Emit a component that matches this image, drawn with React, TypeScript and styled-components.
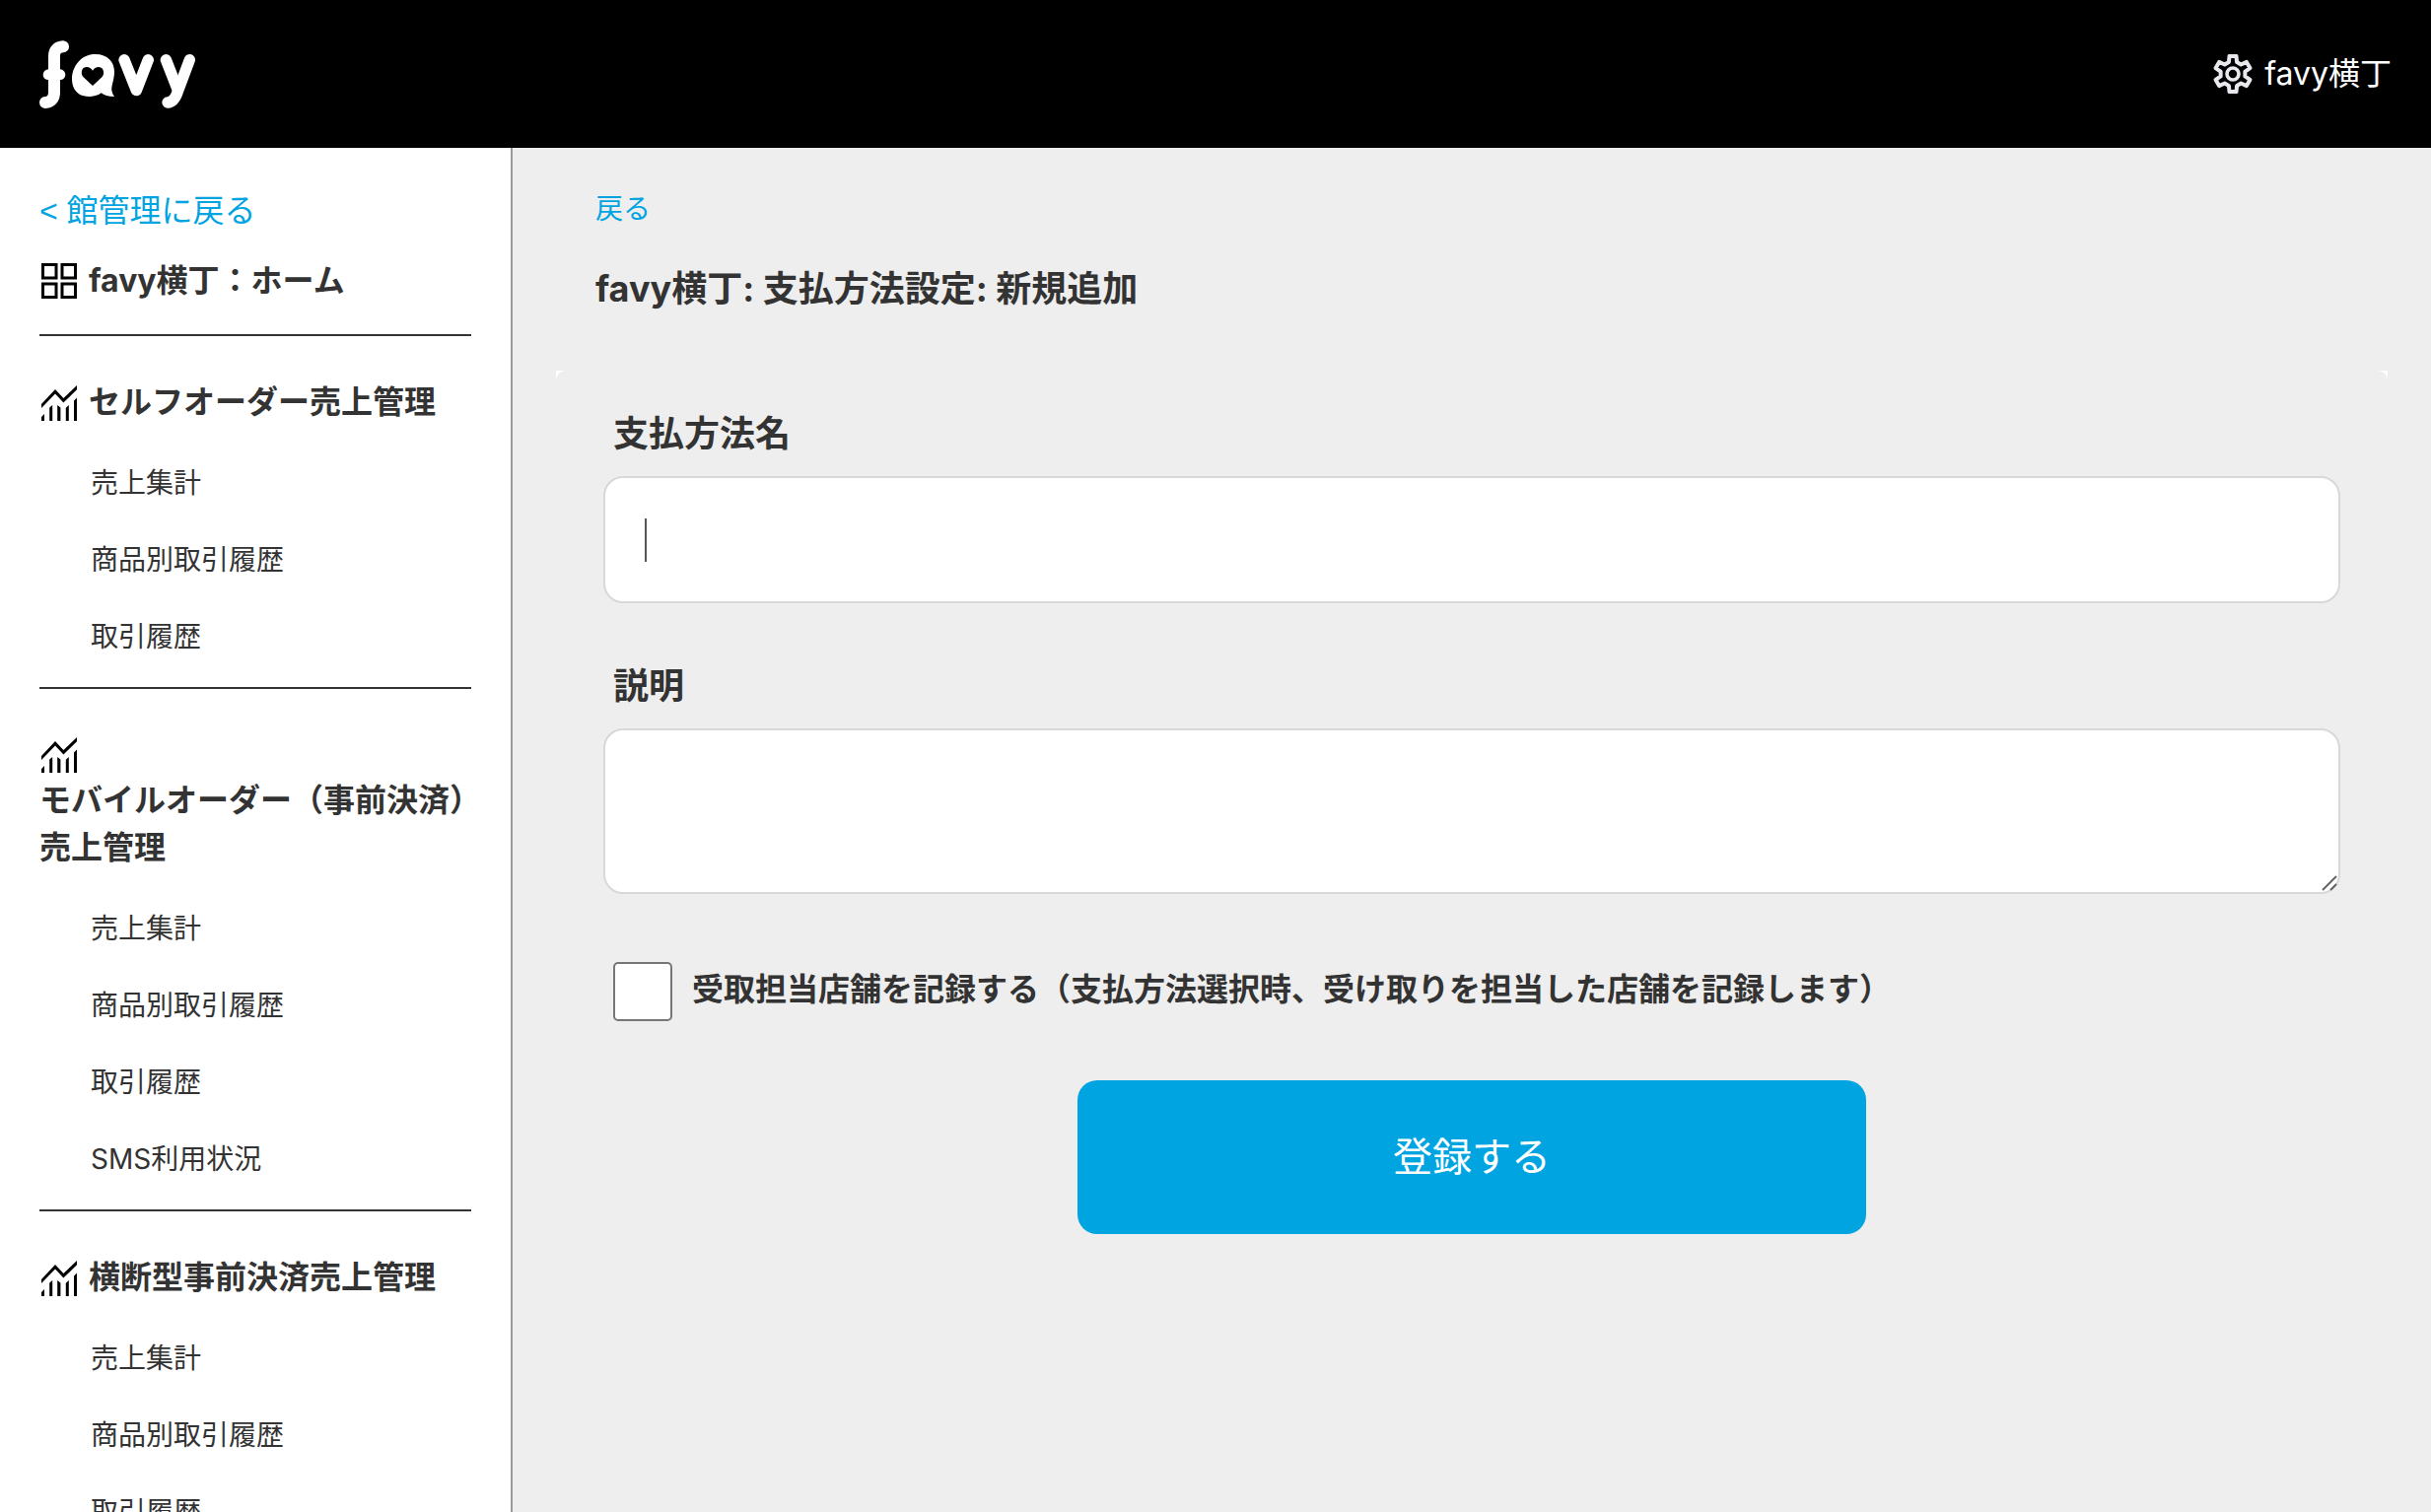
import React from "react";
import styled, { createGlobalStyle } from "styled-components";

const color = {
  brand: "#00a4e1",
  text: "#333",
  page: "#eee",
  edge: "#999",
  field: "#d8d8d8",
};

const GlobalStyle = createGlobalStyle`
  *, *::before, *::after { box-sizing: border-box; }
  body {
    margin: 0;
    background: ${color.page};
    color: ${color.text};
    font-family: Inter, "Noto Sans CJK JP", sans-serif;
    font-size: 28px;
    line-height: 1.5;
  }
  a { color: inherit; text-decoration: none; }
  input, textarea, button { font: inherit; color: inherit; margin: 0; }
`;

const Shell = styled.div`
  display: flex;
  flex-direction: column;
  height: 100vh;
`;

const Header = styled.header`
  display: flex;
  flex: none;
  align-items: center;
  justify-content: space-between;
  height: 150px;
  padding: 0 40px;
  background: #000;
  color: #fff;
`;

const LogoLink = styled.a`
  display: block;
  line-height: 0;
`;

const AccountLink = styled.a`
  display: flex;
  align-items: center;
  gap: 12px;
  font-size: 32px;
`;

const Body = styled.div`
  display: flex;
  flex: 1;
  min-height: 0;
`;

const Sidebar = styled.nav`
  flex: none;
  width: 520px;
  padding: 40px 40px 0;
  overflow-y: auto;
  scrollbar-width: none;
  background: #fff;
  border-right: 2px solid ${color.edge};
`;

const BackLink = styled.a`
  display: block;
  color: ${color.brand};
  font-family: "Liberation Sans", "Noto Sans CJK JP", sans-serif;
  font-size: 32px;
  line-height: 48px;
`;

const HomeLink = styled.a`
  display: flex;
  align-items: center;
  gap: 10px;
  margin-top: 23px;
  padding-bottom: 30px;
  border-bottom: 2px solid ${color.text};
  font-size: 32px;
  font-weight: 700;
  line-height: 48px;
`;

const Section = styled.section`
  padding: 43px 0 12px;
  border-bottom: 2px solid ${color.text};
`;

const SectionTitle = styled.h2`
  display: flex;
  flex-wrap: wrap;
  align-items: center;
  column-gap: 10px;
  margin: 0;
  font-size: 32px;
  font-weight: 700;
  line-height: 48px;

  svg {
    margin: 4px 0 2px;
  }
`;

const Menu = styled.ul`
  margin: 19px 0 0;
  padding: 0;
  list-style: none;
`;

const MenuLink = styled.a`
  display: block;
  padding: 18px 0 18px 52px;
  line-height: 42px;
`;

const Main = styled.main`
  flex: 1;
  min-width: 0;
  padding: 41px 44px;
  overflow-y: auto;
  scrollbar-width: none;
`;

const PageHead = styled.div`
  padding: 0 40px;
`;

const ReturnLink = styled.a`
  display: block;
  color: ${color.brand};
  line-height: 42px;
`;

const PageTitle = styled.h1`
  margin: 33px 0 56px;
  font-size: 36px;
  font-weight: 700;
  line-height: 54px;
`;

const Card = styled.div`
  background: #fff;
`;

const Form = styled.form`
  display: flex;
  flex-direction: column;
  padding: 37px 48px;
  background: ${color.page};
  border-radius: 10px 10px 0 0;
`;

const Field = styled.div`
  position: relative;
  display: flex;
  flex-direction: column;
  margin-bottom: 57px;
`;

const Label = styled.label`
  margin-bottom: 16px;
  padding-left: 10px;
  font-size: 36px;
  font-weight: 700;
  line-height: 54px;
`;

const TextInput = styled.input`
  height: 129px;
  padding: 0 40px;
  border: 2px solid ${color.field};
  border-radius: 20px;
  background: linear-gradient(#555, #555) 40px center / 2px 44px no-repeat #fff;
  caret-color: transparent;
  outline: none;
`;

const TextArea = styled.textarea`
  height: 168px;
  padding: 40px;
  border: 2px solid ${color.field};
  border-radius: 20px;
  background: #fff;
  outline: none;
  resize: none;
`;

const Grip = styled.svg`
  position: absolute;
  right: 3px;
  bottom: 3px;
  pointer-events: none;
`;

const CheckRow = styled.div`
  display: flex;
  gap: 20px;
  margin: 12px 10px 60px;
`;

const Checkbox = styled.input`
  flex: none;
  appearance: none;
  width: 60px;
  height: 60px;
  border: 2px solid #767676;
  border-radius: 5px;
  background: #fff;

  &:checked {
    background: ${color.brand};
  }
`;

const CheckLabel = styled.label`
  font-size: 32px;
  font-weight: 700;
  line-height: 56px;
`;

const Submit = styled.button`
  align-self: center;
  width: 800px;
  max-width: 100%;
  padding: 48px 20px;
  border: 0;
  border-radius: 20px;
  background: ${color.brand};
  color: #fff;
  font-size: 40px;
  line-height: 60px;
  cursor: pointer;
`;

function Logo() {
  return (
    <svg width="158" height="69" viewBox="120 120 474 207" role="img" aria-label="favy">
      <g fill="none" stroke="#fff" strokeWidth="36" strokeLinecap="round" strokeLinejoin="round">
        <path d="M192 139C175 140 165 150 165 166V278C165 297 155 308 138 309" />
        <path strokeWidth="32" d="M147 224H183" />
        <path strokeWidth="34" d="M378 179L415 272L451 179" />
        <path strokeWidth="34" d="M505 179L540 268" />
        <path strokeWidth="34" d="M577 179L541 275C534 297 526 308 510 309" />
      </g>
      <path
        fill="#fff"
        d="M284 162C325 159 348 184 348 215C348 240 338 258 340 272Q342 284 348 291C330 291 316 287 308 280C298 288 284 291 270 291C238 291 219 270 219 238C219 196 250 164 284 162Z"
      />
      <path d="M282 258L254 232C246 224 247 210 254 204C263 198 276 201 282 212C288 201 301 198 309 204C317 210 318 224 310 232Z" />
    </svg>
  );
}

const gearPath =
  [0, 60, 120, 180, 240, 300]
    .flatMap((tooth) =>
      [
        [12.6, -19],
        [18.4, -11],
        [18.4, 11],
        [12.6, 19],
      ].map(([radius, offset]) => {
        const angle = ((tooth + offset - 90) * Math.PI) / 180;
        return `${(radius * Math.cos(angle)).toFixed(2)} ${(radius * Math.sin(angle)).toFixed(2)}`;
      })
    )
    .reduce((path, point, i) => path + (i ? "L" : "M") + point, "") + "Z";

function GearIcon() {
  return (
    <svg width="40" height="40" viewBox="-20 -20 40 40" fill="none" stroke="#e8e8ee" strokeWidth="4" strokeLinejoin="round" aria-hidden="true">
      <path d={gearPath} />
      <circle r="6" strokeWidth="3.6" />
    </svg>
  );
}

function GridIcon() {
  return (
    <svg width="40" height="40" viewBox="0 0 40 40" fill="none" stroke="#000" strokeWidth="3" aria-hidden="true">
      <path d="M3.5 3.5h13.5v13.5h-13.5zM23 3.5h13.5v13.5h-13.5zM3.5 23h13.5v13.5h-13.5zM23 23h13.5v13.5h-13.5z" />
    </svg>
  );
}

function ChartIcon() {
  return (
    <svg width="40" height="40" viewBox="-2 -2 40 40" aria-hidden="true">
      <path d="M0 19L14 4L22.4 13L36 0V4.2L22.4 17.5L14 8.6L0 23Z" />
      <path d="M0 32L3 29V36H0ZM8.2 22.4L11.2 20V36H8.2ZM16.2 20L19.4 22.6V36H16.2ZM24.8 22.8L27.8 20V36H24.8ZM33 15.6L36 12.6V36H33Z" />
    </svg>
  );
}

const sections = [
  {
    title: "セルフオーダー売上管理",
    items: ["売上集計", "商品別取引履歴", "取引履歴"],
  },
  {
    title: "モバイルオーダー（事前決済）売上管理",
    items: ["売上集計", "商品別取引履歴", "取引履歴", "SMS利用状況"],
  },
  {
    title: "横断型事前決済売上管理",
    items: ["売上集計", "商品別取引履歴", "取引履歴"],
  },
];

export default function App() {
  return (
    <Shell lang="ja">
      <GlobalStyle />
      <Header>
        <LogoLink href="#top">
          <Logo />
        </LogoLink>
        <AccountLink href="#account">
          <GearIcon />
          favy横丁
        </AccountLink>
      </Header>
      <Body>
        <Sidebar>
          <BackLink href="#building">&lt; 館管理に戻る</BackLink>
          <HomeLink href="#home">
            <GridIcon />
            favy横丁：ホーム
          </HomeLink>
          {sections.map((section) => (
            <Section key={section.title}>
              <SectionTitle>
                <ChartIcon />
                <span>{section.title}</span>
              </SectionTitle>
              <Menu>
                {section.items.map((item) => (
                  <li key={item}>
                    <MenuLink href="#menu">{item}</MenuLink>
                  </li>
                ))}
              </Menu>
            </Section>
          ))}
        </Sidebar>
        <Main>
          <PageHead>
            <ReturnLink href="#back">戻る</ReturnLink>
            <PageTitle>favy横丁: 支払方法設定: 新規追加</PageTitle>
          </PageHead>
          <Card>
            <Form onSubmit={(event) => event.preventDefault()}>
              <Field>
                <Label htmlFor="name">支払方法名</Label>
                <TextInput id="name" type="text" />
              </Field>
              <Field>
                <Label htmlFor="description">説明</Label>
                <TextArea id="description" />
                <Grip width="16" height="16" viewBox="0 0 16 16" stroke="#666" strokeWidth="2" aria-hidden="true">
                  <path d="M1 15L15 1M9 15L15 9" />
                </Grip>
              </Field>
              <CheckRow>
                <Checkbox id="record" type="checkbox" />
                <CheckLabel htmlFor="record">
                  受取担当店舗を記録する（支払方法選択時、受け取りを担当した店舗を記録します）
                </CheckLabel>
              </CheckRow>
              <Submit type="submit">登録する</Submit>
            </Form>
          </Card>
        </Main>
      </Body>
    </Shell>
  );
}
